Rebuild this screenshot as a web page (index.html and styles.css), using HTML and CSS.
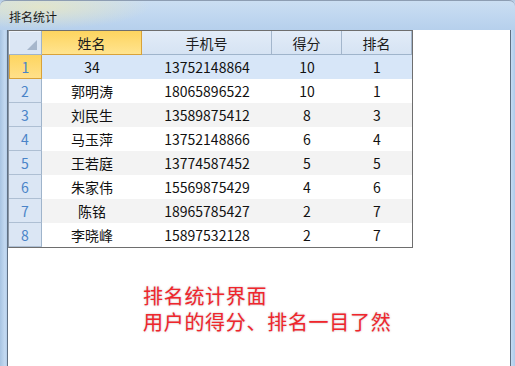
FILE: index.html
```html
<!DOCTYPE html>
<html lang="zh-CN">
<head>
<meta charset="utf-8">
<title>排名统计</title>
<link rel="stylesheet" href="styles.css">
</head>
<body>
<div class="window">
  <div class="titlebar"><span class="title">排名统计</span></div>
  <div class="body-row">
    <div class="frame-left"></div>
    <div class="client">
      <div class="grid">
        <div class="corner"><span class="tri"></span></div>
        <div class="hd hd-active">姓名</div>
        <div class="hd">手机号</div>
        <div class="hd">得分</div>
        <div class="hd">排名</div>

        <div class="rh rh-active">1</div>
        <div class="c sel">34</div><div class="c sel">13752148864</div><div class="c sel">10</div><div class="c sel">1</div>

        <div class="rh">2</div>
        <div class="c">郭明涛</div><div class="c">18065896522</div><div class="c">10</div><div class="c">1</div>

        <div class="rh">3</div>
        <div class="c alt">刘民生</div><div class="c alt">13589875412</div><div class="c alt">8</div><div class="c alt">3</div>

        <div class="rh">4</div>
        <div class="c">马玉萍</div><div class="c">13752148866</div><div class="c">6</div><div class="c">4</div>

        <div class="rh">5</div>
        <div class="c alt">王若庭</div><div class="c alt">13774587452</div><div class="c alt">5</div><div class="c alt">5</div>

        <div class="rh">6</div>
        <div class="c">朱家伟</div><div class="c">15569875429</div><div class="c">4</div><div class="c">6</div>

        <div class="rh">7</div>
        <div class="c alt">陈铭</div><div class="c alt">18965785427</div><div class="c alt">2</div><div class="c alt">7</div>

        <div class="rh">8</div>
        <div class="c">李晓峰</div><div class="c">15897532128</div><div class="c">2</div><div class="c">7</div>
      </div>
      <div class="note">
        <div class="note-line">排名统计界面</div>
        <div class="note-line">用户的得分、排名一目了然</div>
      </div>
    </div>
    <div class="frame-right"></div>
  </div>
</div>
</body>
</html>
```

FILE: styles.css
```css
* { box-sizing: border-box; }
html, body {
  margin: 0;
  padding: 0;
  width: 515px;
  height: 366px;
  overflow: hidden;
  background: #ffffff;
  font-family: "Noto Sans CJK SC", "Noto Sans", sans-serif;
}
.window {
  width: 515px;
  height: 366px;
  display: flex;
  flex-direction: column;
  background: linear-gradient(180deg, #b5cbe3 0px, #c6dbf1 4px, #bcd5ef 30px);
}
.titlebar {
  height: 30px;
  flex: none;
  display: flex;
  align-items: center;
  padding: 2px 0 0 9px;
  border-top: 1px solid #8d9db2;
  border-radius: 6px 6px 0 0;
  background:
    radial-gradient(ellipse 110px 22px at 40px 6px, rgba(235, 232, 190, 0.75), rgba(235, 232, 190, 0) 100%),
    linear-gradient(180deg, #cbdef2 0%, #c0d7f0 50%, #b6d0ec 100%);
}
.title {
  font-size: 12px;
  line-height: 14px;
  color: #1a1a1a;
}
.body-row {
  flex: 1;
  display: flex;
  min-height: 0;
}
.frame-left {
  width: 8px;
  flex: none;
  background: linear-gradient(90deg, #a8c4e2, #c4daf1 5px, #b3cce8);
  border-right: 1px solid #5f6f82;
}
.frame-right {
  width: 5px;
  flex: none;
  background: linear-gradient(90deg, #c6dcf3, #aecbeb);
  border-left: 1px solid #5f6f82;
}
.client {
  flex: 1;
  background: #ffffff;
  display: flex;
  flex-direction: column;
  align-items: flex-start;
}
.grid {
  display: grid;
  grid-template-columns: 33px 100px 130px 70px 70px;
  grid-auto-rows: 24px;
  border: 1px solid #6e6e6e;
  border-left-color: #8a97a6;
  font-size: 14px;
  color: #111111;
}
.grid > div {
  display: flex;
  align-items: center;
  justify-content: center;
  line-height: 16px;
  white-space: nowrap;
}
.corner {
  background: #dbe6f4;
  border-right: 1px solid #9fb4cb;
  border-bottom: 1px solid #9fb4cb;
  box-shadow: inset 1px 1px 0 #eef4fb;
  position: relative;
}
.tri {
  position: absolute;
  right: 4px;
  bottom: 4px;
  width: 0;
  height: 0;
  border-left: 10px solid transparent;
  border-bottom: 10px solid #a6b6cb;
}
.hd {
  background: linear-gradient(180deg, #e2ecf8, #d6e3f3);
  border-right: 1px solid #a3b6cc;
  border-bottom: 1px solid #9fb4cb;
  color: #1c1c1c;
}
.hd:last-child { border-right: none; }
.hd-active {
  background: linear-gradient(180deg, #fdd45f, #ffe48f);
  border-right: 1px solid #d8a23a;
  border-bottom: 1px solid #d8a23a;
}
.rh {
  background: #dbe6f4;
  border-right: 1px solid #9fb4cb;
  border-bottom: 1px solid #aebfd3;
  color: #4a84c8;
}
.rh-active {
  background: linear-gradient(180deg, #fdd55f, #ffe08a);
  border: 1px solid #d8a23a;
  border-top: none;
  color: #4a84c8;
}
.c { background: #ffffff; }
.c.alt { background: #f3f3f3; }
.c.sel { background: #d7e6f8; }
.note {
  margin: 37px 0 0 135px;
  display: flex;
  flex-direction: column;
  gap: 4px;
  font-size: 20px;
  letter-spacing: 0.7px;
  color: #f0262c;
  text-shadow: 0 0 2px rgba(190, 170, 175, 0.9), 0 0 1px rgba(255, 255, 255, 1);
}
.note-line {
  line-height: 22px;
  height: 22px;
}
```
